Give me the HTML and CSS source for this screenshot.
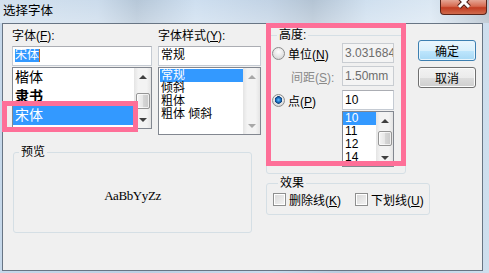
FILE: index.html
```html
<!DOCTYPE html>
<html lang="zh-CN">
<head>
    <meta charset="UTF-8">
    <title>选择字体</title>
    <link rel="stylesheet" href="styles.css">
</head>
<body>
    <div class="window">
        <div class="titlebar">
            <span class="title">选择字体</span>
            <div class="close">
                <svg width="47" height="15" viewBox="0 0 47 15">
                    <path d="M19 -3 L29 7 M29 -3 L19 7" stroke="#4a1a12" stroke-width="5" fill="none"/>
                    <path d="M19 -3 L29 7 M29 -3 L19 7" stroke="#ffffff" stroke-width="3" fill="none"/>
                </svg>
            </div>
        </div>

        <div class="client">
            <div class="left-pane">
                <div class="lists">
                    <div class="col-font">
                        <div class="label">字体(<u>F</u>):</div>
                        <div class="textbox"><span class="sel">宋体</span><span class="caret"></span></div>
                        <div class="listbox font-list">
                            <ul class="items">
                                <li>楷体</li>
                                <li class="bold">隶书</li>
                                <li class="selected">宋体</li>
                            </ul>
                            <div class="scrollbar">
                                <div class="sb-btn"><span class="arrow-up"></span></div>
                                <div class="sb-track"><div class="thumb thumb-font"></div></div>
                                <div class="sb-btn"><span class="arrow-down"></span></div>
                            </div>
                        </div>
                    </div>

                    <div class="col-style">
                        <div class="label">字体样式(<u>Y</u>):</div>
                        <div class="textbox"><span class="plain">常规</span></div>
                        <div class="listbox style-list">
                            <ul class="items style-items">
                                <li class="selected">常规</li>
                                <li>倾斜</li>
                                <li>粗体</li>
                                <li>粗体 倾斜</li>
                            </ul>
                            <div class="scrollbar">
                                <div class="sb-btn"><span class="arrow-up off"></span></div>
                                <div class="sb-track"></div>
                                <div class="sb-btn"><span class="arrow-down off"></span></div>
                            </div>
                        </div>
                    </div>
                </div>

                <fieldset class="group preview">
                    <legend>预览</legend>
                    <div class="sample">AaBbYyZz</div>
                </fieldset>
            </div>

            <div class="right-pane">
                <div class="top-right">
                    <fieldset class="group size-group">
                        <legend>高度:</legend>
                        <div class="row row-unit">
                            <span class="radio"></span>
                            <span class="opt">单位(<u>N</u>)</span>
                            <div class="field disabled">3.031684</div>
                        </div>
                        <div class="row row-gap">
                            <span class="muted">间距(<u>S</u>):</span>
                            <div class="field disabled">1.50mm</div>
                        </div>
                        <div class="row row-pt">
                            <span class="radio checked"></span>
                            <span class="opt">点(<u>P</u>)</span>
                            <div class="field">10</div>
                        </div>
                        <div class="listbox size-list">
                            <ul class="items size-items">
                                <li class="selected">10</li>
                                <li>11</li>
                                <li>12</li>
                                <li>14</li>
                            </ul>
                            <div class="scrollbar">
                                <div class="sb-btn"><span class="arrow-up"></span></div>
                                <div class="sb-track"><div class="thumb thumb-size"></div></div>
                                <div class="sb-btn"><span class="arrow-down"></span></div>
                            </div>
                        </div>
                    </fieldset>

                    <div class="buttons">
                        <button class="btn default">确定</button>
                        <button class="btn">取消</button>
                    </div>
                </div>

                <fieldset class="group effects">
                    <legend>效果</legend>
                    <div class="checks">
                        <span class="check"></span>
                        <span class="opt">删除线(<u>K</u>)</span>
                        <span class="check second"></span>
                        <span class="opt">下划线(<u>U</u>)</span>
                    </div>
                </fieldset>
            </div>
        </div>

        <!-- 标注框 -->
        <div class="mark mark-font"></div>
        <div class="mark mark-size"></div>
    </div>
</body>
</html>
```

FILE: styles.css
```css
* {
    box-sizing: border-box;
}
body {
    margin: 0;
    font-family: "Liberation Sans", "Noto Sans CJK SC", sans-serif;
    font-size: 12px;
    color: #000;
}
.window {
    position: relative;
    width: 489px;
    height: 273px;
    display: flex;
    flex-direction: column;
    overflow: hidden;
    background: linear-gradient(to right, #c6d8ea, #bcd0e4 30%, #cadcee 55%, #b9ccdf 70%, #cfdfee 100%);
}
.titlebar {
    height: 23px;
    display: flex;
    align-items: flex-start;
    background:
        linear-gradient(to bottom, rgba(255,255,255,0.15), rgba(255,255,255,0.35)),
        linear-gradient(to right, #cbdcec 0%, #c2d5e8 20%, #a9bdd1 28%, #c5d9ed 40%, #b7cbe0 55%, #a6b9cc 64%, #c7daec 75%, #d4e3f1 88%, #b4c4d3 96%, #a3b1bf 100%);
}
.title {
    padding: 4px 0 0 3px;
    line-height: 15px;
    font-size: 12.5px;
}
.close {
    margin-left: auto;
    margin-right: 2px;
    width: 47px;
    height: 15px;
    border: 1px solid #5a2419;
    border-top: 0;
    border-radius: 0 0 4px 4px;
    overflow: hidden;
    background: linear-gradient(to bottom, #e5a594 0%, #d66a50 45%, #c23d22 55%, #cf6a4c 100%);
}
.close svg {
    display: block;
    margin-left: -1px;
}
.client {
    flex: 1;
    margin: 0 6px 2px 2px;
    border: 1px solid #687584;
    background: #f0f0f0;
    display: flex;
    align-items: flex-start;
    padding-left: 9px;
}

/* 左侧：字体、字形、预览 */
.left-pane {
    width: 249px;
    margin-top: 4px;
    display: flex;
    flex-direction: column;
}
.lists {
    display: flex;
}
.col-font {
    width: 140px;
}
.col-style {
    width: 103px;
    margin-left: 6px;
}
.label {
    height: 16px;
    line-height: 16px;
    white-space: nowrap;
}
.textbox {
    height: 20px;
    margin-top: 2px;
    padding: 2px 0 0 2px;
    display: flex;
    border: 1px solid #c5cbd3;
    border-top-color: #abadb3;
    background: #fff;
}
.sel {
    height: 13px;
    line-height: 13px;
    background: #3399ff;
    color: #fff;
}
.plain {
    line-height: 13px;
}
.caret {
    width: 1px;
    height: 13px;
    background: #c8671a;
}
.listbox {
    margin-top: 1px;
    display: flex;
    border: 1px solid #828790;
    background: #fff;
}
.font-list {
    height: 62px;
}
.style-list {
    height: 68px;
}
.items {
    list-style: none;
    margin: 0;
    padding: 0;
    flex: 1;
    min-width: 0;
    overflow: hidden;
}
.items li {
    white-space: nowrap;
}
.font-list .items li {
    height: 19px;
    line-height: 19px;
    font-size: 14px;
    padding-left: 2px;
}
.items li.bold {
    font-weight: bold;
}
.items li.selected {
    background: #3399ff;
    color: #fff;
}
.style-items {
    padding: 1px 0 0 1px;
}
.style-items li {
    height: 13px;
    line-height: 13px;
    padding-left: 1px;
}
.size-items li {
    height: 13px;
    line-height: 13px;
    padding-left: 2px;
}

/* 滚动条 */
.scrollbar {
    width: 17px;
    display: flex;
    flex-direction: column;
    background: linear-gradient(to right, #e4e4e4, #f3f3f3 25%, #f3f3f3 75%, #e4e4e4);
}
.sb-btn {
    height: 17px;
    display: flex;
    align-items: center;
    justify-content: center;
}
.sb-track {
    flex: 1;
}
.arrow-up,
.arrow-down {
    width: 0;
    height: 0;
    border-left: 4px solid transparent;
    border-right: 4px solid transparent;
}
.arrow-up {
    border-bottom: 4px solid #404040;
}
.arrow-down {
    border-top: 4px solid #404040;
}
.arrow-up.off {
    border-bottom-color: #a8a8a8;
}
.arrow-down.off {
    border-top-color: #a8a8a8;
}
.thumb {
    margin: 0 1px 0 2px;
    border: 1px solid #959595;
    border-radius: 2px;
    background: linear-gradient(to right, #f5f5f5, #e6e6e6 50%, #d6d6d6 51%, #c9c9c9);
    box-shadow: inset 0 0 0 1px rgba(255,255,255,0.7);
}
.thumb-font {
    margin-top: 8px;
    height: 16px;
}
.thumb-size {
    margin-top: 2px;
    height: 15px;
}

/* 分组框 */
.group {
    margin: 0;
    padding: 0;
    min-width: 0;
    border: 1px solid #d5dfe5;
    border-radius: 3px;
}
.group legend {
    margin-left: 5px;
    padding: 0 2px;
    height: 13px;
    line-height: 13px;
}
.preview {
    margin: 11px 0 0 1px;
    width: 239px;
    height: 87px;
}
.sample {
    margin-top: 30px;
    text-align: center;
    font-family: "Liberation Serif", serif;
    font-size: 13px;
    letter-spacing: -0.4px;
    line-height: 14px;
}

/* 右侧：高度、按钮、效果 */
.right-pane {
    margin: 5px 0 0 5px;
    display: flex;
    flex-direction: column;
}
.top-right {
    display: flex;
    align-items: flex-start;
}
.size-group {
    width: 140px;
    height: 145px;
    padding: 0 11px 0 5px;
}
.row {
    display: flex;
    align-items: center;
    height: 20px;
}
.row-unit {
    margin-top: 1px;
}
.row-gap {
    margin-top: 3px;
}
.row-pt {
    margin-top: 4px;
}
.radio {
    width: 13px;
    height: 13px;
    border-radius: 50%;
    border: 1px solid #8c8c8c;
    background: radial-gradient(circle at 50% 35%, #ffffff, #e2e2e2 60%, #c8c8c8);
}
.radio.checked {
    background:
        radial-gradient(circle at 50% 45%, #6cc0ff 0, #1f78c8 2px, #0b3f7a 3.5px, transparent 4px),
        radial-gradient(circle at 50% 35%, #ffffff, #e2e2e2 60%, #c8c8c8);
}
.opt {
    margin-left: 3px;
    white-space: nowrap;
}
.muted {
    margin-left: 19px;
    color: #8a8a8a;
    white-space: nowrap;
}
.field {
    margin-left: auto;
    width: 52px;
    height: 20px;
    padding-left: 2px;
    line-height: 18px;
    white-space: nowrap;
    overflow: hidden;
    border: 1px solid #c5cbd3;
    border-top-color: #abadb3;
    background: #fff;
}
.field.disabled {
    background: #f4f4f4;
    border-color: #c9cdd2;
    color: #6d6d6d;
}
.size-list {
    margin: 1px 0 0 auto;
    width: 52px;
    height: 56px;
}
.buttons {
    margin-left: 12px;
    padding-top: 11px;
    display: flex;
    flex-direction: column;
    gap: 6px;
}
.btn {
    width: 58px;
    height: 21px;
    padding: 0;
    font: inherit;
    color: #000;
    border: 1px solid #707070;
    border-radius: 3px;
    background: linear-gradient(to bottom, #f2f2f2 0%, #ebebeb 50%, #dddddd 51%, #cfcfcf 100%);
    box-shadow: inset 0 0 0 1px #fcfcfc;
}
.btn.default {
    border-color: #3c7fb1;
    background: linear-gradient(to bottom, #eaf6fd 0%, #d9f0fc 50%, #bee6fd 51%, #a7d9f5 100%);
    box-shadow: inset 0 0 0 1px #e8f5fc;
}
.effects {
    margin-top: 3px;
    width: 164px;
    height: 38px;
    padding: 3px 0 0 6px;
}
.checks {
    display: flex;
    align-items: center;
    height: 13px;
}
.check {
    width: 13px;
    height: 13px;
    border: 1px solid #8e8f8f;
    background: linear-gradient(135deg, #d8d8d8, #f4f4f4);
    box-shadow: inset 0 0 0 1px #fff;
}
.check.second {
    margin-left: 14px;
}

/* 标注框 */
.mark {
    position: absolute;
    border: 5px solid #fe6f98;
}
.mark-font {
    left: 2px;
    top: 101px;
    width: 136px;
    height: 31px;
}
.mark-size {
    left: 266px;
    top: 23px;
    width: 140px;
    height: 143px;
}
```
